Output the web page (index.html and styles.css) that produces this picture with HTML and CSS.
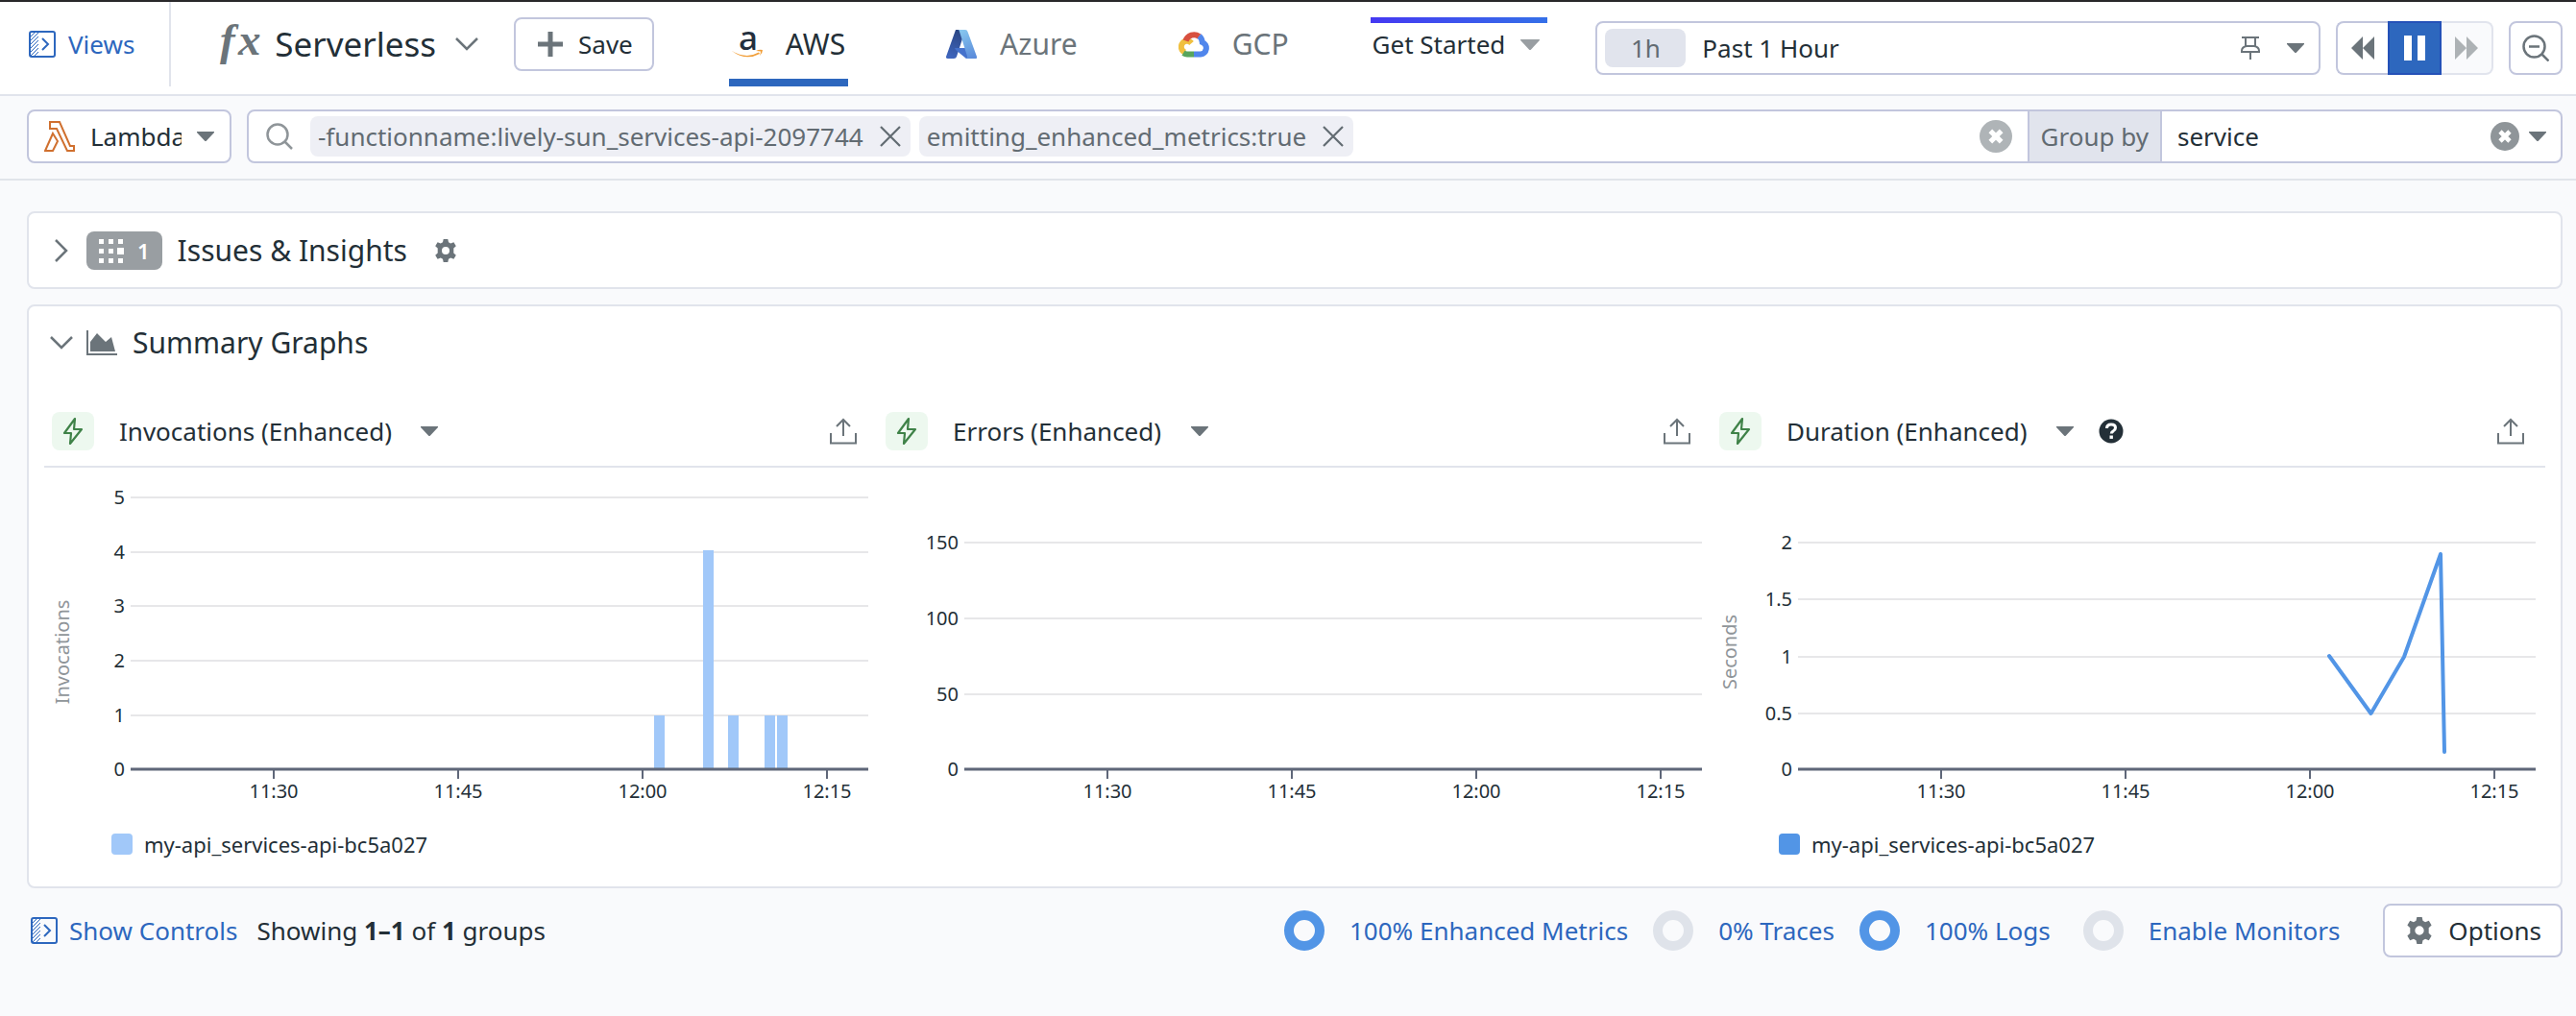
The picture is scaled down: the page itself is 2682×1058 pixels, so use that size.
FILE: index.html
```html
<!DOCTYPE html>
<html lang="en">
<head>
<meta charset="utf-8">
<title>Serverless</title>
<link rel="stylesheet" href="styles.css">
</head>
<body>
<svg class="sprite" aria-hidden="true">
  <defs>
    <pattern id="hatch" width="4" height="4" patternUnits="userSpaceOnUse">
      <path d="M-1 5 5-1M-1 1 1-1M3 5 5 3" stroke="#2d67be" stroke-width="1"/>
    </pattern>
    <linearGradient id="azDark" x1="0.6" y1="0" x2="0.3" y2="1"><stop offset="0" stop-color="#2a4583"/><stop offset="1" stop-color="#3f66bd"/></linearGradient>
    <linearGradient id="azLight" x1="0.3" y1="0" x2="0.6" y2="1"><stop offset="0" stop-color="#86c5ee"/><stop offset="1" stop-color="#5c8ddb"/></linearGradient>
  </defs>
  <symbol id="panel" viewBox="0 0 28 28">
    <rect x="2" y="2" width="8" height="24" fill="url(#hatch)"/>
    <rect x="1" y="1" width="26" height="26" rx="2" fill="none" stroke="#2d67be" stroke-width="2"/>
    <path d="M14 8l6 6-6 6" fill="none" stroke="#2d67be" stroke-width="2"/>
  </symbol>
  <symbol id="caret" viewBox="0 0 18 10"><path d="M0 0h18v1l-8 8.500q-1 1-2 0L0 1z"/></symbol>
  <symbol id="chevron" viewBox="0 0 24 14"><path d="M1 1l11 11L23 1" fill="none" stroke="currentColor" stroke-width="2.500"/></symbol>
  <symbol id="chevron-right" viewBox="0 0 14 24"><path d="M1 1l11 11L1 23" fill="none" stroke="currentColor" stroke-width="2.500"/></symbol>
  <symbol id="close" viewBox="0 0 22 22"><path d="M1 1l20 20M21 1L1 21" fill="none" stroke="currentColor" stroke-width="2.200"/></symbol>
  <symbol id="clear" viewBox="0 0 30 30"><circle cx="15" cy="15" r="15"/><path d="M10 10l10 10M20 10L10 20" stroke="#fff" stroke-width="4.600"/></symbol>
  <symbol id="gear" viewBox="0 0 24 24"><path fill-rule="evenodd" d="M9.700 0h4.600l.7 3.300 2.200 1.200 3.200-1.200 2.400 4-2.500 2.300v4.800l2.500 2.300-2.400 4-3.200-1.200-2.200 1.200-.7 3.300H9.700L9 20.700l-2.200-1.200-3.200 1.200-2.400-4 2.500-2.300V9.600L1.200 7.300l2.400-4 3.200 1.200L9 3.300zM12 8a4 4 0 1 0 0 8 4 4 0 0 0 0-8z"/></symbol>
  <symbol id="bolt" viewBox="0 0 22 30"><path d="M13 2L2 17h7L8 28l12-15h-8z" fill="none" stroke="#3f8248" stroke-width="2.200" stroke-linejoin="round"/></symbol>
  <symbol id="share" viewBox="0 0 28 28"><path d="M1 16v10.500h26V16M14 19V2M7 9l7-7 7 7" fill="none" stroke="currentColor" stroke-width="2"/></symbol>
</svg>

<header class="topbar">
  <a class="link views" href="#views"><svg width="28" height="28" aria-hidden="true"><use href="#panel"/></svg>Views</a>
  <button class="product" type="button">
    <svg class="fx" width="46" height="46" viewBox="0 0 46 46" aria-hidden="true"><text x="5" y="34" font-size="47">f<tspan x="24">x</tspan></text></svg>
    <span class="product-name">Serverless</span>
    <svg class="grey" width="24" height="14" aria-hidden="true"><use href="#chevron"/></svg>
  </button>
  <button class="btn save" type="button"><svg width="26" height="26" viewBox="0 0 26 26" aria-hidden="true"><path d="M13 0v26M0 13h26" stroke="#6b747a" stroke-width="5"/></svg>Save</button>
  <nav class="tabs" aria-label="Cloud provider">
    <a class="tab active" href="#aws"><svg class="aws" width="32" height="30" viewBox="0 0 32 30" aria-hidden="true"><text x="7" y="21" font-size="35">a</text><path d="M0 22q15 9 28 1.500l1 1.500Q14 33 0 22z" fill="#f19e38"/><path d="M25 22q4-2 7-1 0 3-3 6 1-3 1-4.500-2-.5-5-.5z" fill="#f19e38"/></svg>AWS</a>
    <a class="tab" href="#azure"><svg width="32" height="30" viewBox="0 0 32 30" aria-hidden="true"><path d="M10 0h10l-9 28q-.6 2-3 2H2q-2.500 0-2-2z" fill="url(#azDark)"/><path d="M9 19h13l3 11h-4L10 21z" fill="#4572cc"/><path d="M13 0h7q2 0 2.500 2L32 28q.4 2-1.500 2H20q2.500 0 2-2.500L14 2q-.4-1.500-1-2z" fill="url(#azLight)"/></svg>Azure</a>
    <a class="tab" href="#gcp"><svg width="32" height="28" viewBox="0 0 32 28" aria-hidden="true" fill="none" stroke-width="6"><path d="M7 22.500A6 6 0 1 1 13.500 13" stroke="#f0c040" /><path d="M7.500 10.500A9 9 0 0 1 21.500 6" stroke="#d8503f"/><path d="M21.500 5.500Q24.500 8 24.800 12A6.500 6.500 0 0 1 23 24.500H16" stroke="#5086ec"/><path d="M16 24.500H9q-2 0-4-1.200" stroke="#58a55c"/></svg>GCP</a>
  </nav>
  <button class="get-started" type="button">Get Started<svg width="20" height="11" aria-hidden="true" fill="#999ea2"><use href="#caret"/></svg></button>
  <div class="time">
    <button class="box picker" type="button">
      <span class="pill">1h</span><span class="picker-text">Past 1 Hour</span>
      <svg width="20" height="24" viewBox="0 0 20 24" aria-hidden="true" fill="none" stroke="#6b747a" stroke-width="2"><path d="M1 1h18M5 1v9M15 1v9M1 16v-1q0-4 5-5h8q5 1 5 5v1zM10 16v8"/></svg>
      <svg class="grey" width="18" height="10" aria-hidden="true"><use href="#caret"/></svg>
    </button>
    <div class="playback">
      <button class="play back" type="button" aria-label="Back"><svg width="24" height="24" viewBox="0 0 24 24" aria-hidden="true" fill="#6b747a"><path d="M12 0v24L0 12zM24 0v24L12 12z"/></svg></button>
      <button class="play pause" type="button" aria-label="Pause"><svg width="22" height="26" viewBox="0 0 22 26" aria-hidden="true" fill="#fff"><path d="M0 0h8v26H0zM14 0h8v26h-8z"/></svg></button>
      <button class="play forward" type="button" aria-label="Forward" disabled><svg width="24" height="24" viewBox="0 0 24 24" aria-hidden="true" fill="#adb2b5"><path d="M0 0v24l12-12zM12 0v24l12-12z"/></svg></button>
    </div>
    <button class="box zoom-out" type="button" aria-label="Zoom out"><svg width="28" height="28" viewBox="0 0 28 28" aria-hidden="true" fill="none" stroke="#6b747a" stroke-width="2.500"><circle cx="12.500" cy="12.500" r="11"/><path d="M7 12.500h11M20.500 20.500l7 7"/></svg></button>
  </div>
</header>

<section class="filters" aria-label="Filters">
  <div class="box service">
    <svg width="32" height="32" viewBox="0 0 32 32" aria-hidden="true" fill="none" stroke="#d0702f" stroke-width="2"><path d="M6 1h10l11 25h4v5h-7L13 8H6zM9 13l5 8-5 10H1z"/></svg>
    <select class="service-select" aria-label="Resource type"><option>Lambda</option></select>
    <svg class="grey" width="18" height="10" aria-hidden="true"><use href="#caret"/></svg>
  </div>
  <div class="box search">
    <div class="query">
      <svg width="28" height="28" viewBox="0 0 28 28" aria-hidden="true" fill="none" stroke="#8f9599" stroke-width="2.500"><circle cx="12" cy="12" r="10.500"/><path d="M19.500 19.500l7.500 7.500"/></svg>
      <div class="chips">
        <span class="chip">-functionname:lively-sun_services-api-2097744<button type="button" aria-label="Remove"><svg width="22" height="22" aria-hidden="true"><use href="#close"/></svg></button></span>
        <span class="chip">emitting_enhanced_metrics:true<button type="button" aria-label="Remove"><svg width="22" height="22" aria-hidden="true"><use href="#close"/></svg></button></span>
      </div>
      <input class="query-input" type="text" aria-label="Filter functions">
      <button class="plain" type="button" aria-label="Clear filters"><svg width="34" height="34" aria-hidden="true" fill="#afb4b7"><use href="#clear"/></svg></button>
    </div>
    <label class="group-label" for="group">Group by</label>
    <div class="group">
      <select class="group-select" id="group"><option>service</option></select>
      <button class="plain" type="button" aria-label="Clear grouping"><svg width="30" height="30" aria-hidden="true" fill="#8f9599"><use href="#clear"/></svg></button>
      <svg class="grey" width="18" height="10" aria-hidden="true"><use href="#caret"/></svg>
    </div>
  </div>
</section>

<main class="content">
  <section class="card issues">
    <button class="plain chev" type="button" aria-label="Expand"><svg width="14" height="24" aria-hidden="true"><use href="#chevron-right"/></svg></button>
    <span class="badge"><svg width="26" height="26" viewBox="0 0 26 26" aria-hidden="true" fill="#fff"><path d="M0 1h5v5H0zM10 1h5v5h-5zM20 1h5v5h-5zM0 11h5v5H0zM10 11h5v5h-5zM19 10h7v7h-7zM0 21h5v5H0zM10 21h5v5h-5zM20 21h5v5h-5z"/></svg>1</span>
    <h2 class="heading">Issues &amp; Insights</h2>
    <button class="plain issues-gear" type="button" aria-label="Settings"><svg width="24" height="24" aria-hidden="true"><use href="#gear"/></svg></button>
  </section>

  <section class="card">
    <div class="summary-head">
      <button class="plain chev" type="button" aria-label="Collapse"><svg width="24" height="14" aria-hidden="true"><use href="#chevron"/></svg></button>
      <svg class="grey" width="32" height="26" viewBox="0 0 32 26" aria-hidden="true"><path d="M0 0h2v24h30v2H0zM4 22V12l7-9 9 9 6-5 4 15z"/></svg>
      <h2 class="heading">Summary Graphs</h2>
    </div>
    <div class="widgets">
      <article class="widget">
        <header class="widget-head">
          <span class="bolt"><svg width="22" height="30" aria-hidden="true"><use href="#bolt"/></svg></span>
          <select class="metric" aria-label="First graph"><option>Invocations (Enhanced)</option></select>
          <svg class="grey" width="18" height="10" aria-hidden="true"><use href="#caret"/></svg>
          <button class="plain share" type="button" aria-label="Export"><svg width="28" height="28" aria-hidden="true"><use href="#share"/></svg></button>
        </header>
        <svg class="chart" viewBox="0 0 868 376" role="img" aria-label="Invocations over time">
          <path class="grid" d="M90 31h768M90 88h768M90 144h768M90 201h768M90 258h768"/>
          <path class="bar" d="M635 258h11v56h-11zM686 86h11v228h-11zM712 258h11v56h-11zM750 258h11v56h-11zM763 258h11v56h-11z"/>
          <path class="ticks" d="M239 314v10M431 314v10M623 314v10M815 314v10"/>
          <path class="axis" d="M90 314h768"/>
          <g class="ylab"><text x="84" y="38">5</text><text x="84" y="95">4</text><text x="84" y="151">3</text><text x="84" y="208">2</text><text x="84" y="265">1</text><text x="84" y="321">0</text></g>
          <g class="xlab"><text x="239" y="344">11:30</text><text x="431" y="344">11:45</text><text x="623" y="344">12:00</text><text x="815" y="344">12:15</text></g>
          <text class="unit" transform="translate(26 192) rotate(-90)">Invocations</text>
        </svg>
        <div class="legend"><span class="swatch light"></span>my-api_services-api-bc5a027</div>
      </article>
      <article class="widget">
        <header class="widget-head">
          <span class="bolt"><svg width="22" height="30" aria-hidden="true"><use href="#bolt"/></svg></span>
          <select class="metric" aria-label="Second graph"><option>Errors (Enhanced)</option></select>
          <svg class="grey" width="18" height="10" aria-hidden="true"><use href="#caret"/></svg>
          <button class="plain share" type="button" aria-label="Export"><svg width="28" height="28" aria-hidden="true"><use href="#share"/></svg></button>
        </header>
        <svg class="chart" viewBox="0 0 868 376" role="img" aria-label="Errors over time">
          <path class="grid" d="M90 78h768M90 157h768M90 236h768"/>
          <path class="ticks" d="M239 314v10M431 314v10M623 314v10M815 314v10"/>
          <path class="axis" d="M90 314h768"/>
          <g class="ylab"><text x="84" y="85">150</text><text x="84" y="164">100</text><text x="84" y="243">50</text><text x="84" y="321">0</text></g>
          <g class="xlab"><text x="239" y="344">11:30</text><text x="431" y="344">11:45</text><text x="623" y="344">12:00</text><text x="815" y="344">12:15</text></g>
        </svg>
      </article>
      <article class="widget">
        <header class="widget-head">
          <span class="bolt"><svg width="22" height="30" aria-hidden="true"><use href="#bolt"/></svg></span>
          <select class="metric" aria-label="Third graph"><option>Duration (Enhanced)</option></select>
          <svg class="grey" width="18" height="10" aria-hidden="true"><use href="#caret"/></svg>
          <button class="plain help" type="button" aria-label="Help"><svg width="26" height="26" viewBox="0 0 26 26" aria-hidden="true"><circle cx="13" cy="13" r="12.500" fill="#232f37"/><path d="M8.500 10q0-4 4.500-4t4.500 3.600q0 2-2.200 3.200-2 1-2 2.700" fill="none" stroke="#fff" stroke-width="3"/><path d="M11.500 17.500h3.400v3.400h-3.400z" fill="#fff"/></svg></button>
          <button class="plain share" type="button" aria-label="Export"><svg width="28" height="28" aria-hidden="true"><use href="#share"/></svg></button>
        </header>
        <svg class="chart" viewBox="0 0 868 376" role="img" aria-label="Duration over time">
          <path class="grid" d="M90 78h768M90 137h768M90 197h768M90 256h768"/>
          <path class="ticks" d="M239 314v10M431 314v10M623 314v10M815 314v10"/>
          <path class="axis" d="M90 314h768"/>
          <path class="line" d="M643 196l43.500 60 34.500-59 38-107 4 206"/>
          <g class="ylab"><text x="84" y="85">2</text><text x="84" y="144">1.5</text><text x="84" y="204">1</text><text x="84" y="263">0.5</text><text x="84" y="321">0</text></g>
          <g class="xlab"><text x="239" y="344">11:30</text><text x="431" y="344">11:45</text><text x="623" y="344">12:00</text><text x="815" y="344">12:15</text></g>
          <text class="unit" transform="translate(26 192) rotate(-90)">Seconds</text>
        </svg>
        <div class="legend"><span class="swatch"></span>my-api_services-api-bc5a027</div>
      </article>
    </div>
  </section>

  <footer class="footer">
    <a class="link controls" href="#controls"><svg width="28" height="28" aria-hidden="true"><use href="#panel"/></svg>Show Controls</a>
    <p class="count">Showing <b>1–1</b> of <b>1</b> groups</p>
    <div class="coverage">
      <a class="link stat" href="#metrics"><span class="ring full"></span>100% Enhanced Metrics</a>
      <a class="link stat" href="#traces"><span class="ring"></span>0% Traces</a>
      <a class="link stat" href="#logs"><span class="ring full"></span>100% Logs</a>
      <a class="link stat monitors" href="#monitors"><span class="ring"></span>Enable Monitors</a>
    </div>
    <button class="btn options" type="button"><svg class="grey" width="28" height="28" aria-hidden="true"><use href="#gear"/></svg>Options</button>
  </footer>
</main>
</body>
</html>
```
FILE: styles.css
```css
* { box-sizing: border-box; }

body {
  margin: 0;
  background: #f9fafc;
  color: #232f37;
  font: 26px/36px "Noto Sans", sans-serif;
}

svg { display: block; flex: none; }
.sprite { position: absolute; width: 0; height: 0; }
.grey { color: #6b747a; fill: #6b747a; }

button, select, input { font: inherit; color: inherit; margin: 0; padding: 0; }
button { display: flex; align-items: center; background: none; border: 0; white-space: nowrap; }
select { appearance: none; border: 0; background: none; }
.plain { color: #6b747a; fill: #6b747a; }
.link { display: flex; align-items: center; color: #2d67be; text-decoration: none; white-space: nowrap; }

.box, .btn {
  display: flex;
  align-items: center;
  height: 56px;
  background: #fff;
  border: 2px solid #c2c6dd;
  border-radius: 8px;
}

/* Top bar */
.topbar {
  display: flex;
  height: 100px;
  padding: 0 14px 8px 30px;
  align-items: center;
  background: #fff;
  border-top: 2px solid #29282a;
  border-bottom: 2px solid #e1e4ec;
}
.views { align-self: stretch; gap: 13px; padding-right: 36px; border-right: 2px solid #e1e4ec; }
.product { gap: 16px; margin-left: 46px; }
.fx, .aws { overflow: visible; }
.fx text { font-family: "Liberation Serif", serif; font-weight: bold; font-style: italic; fill: #6b747a; }
.product-name { font-size: 35px; line-height: 48px; }
.product > :last-child { margin-left: 4px; }
.save { gap: 16px; margin-left: 37px; padding: 0 20px 0 23px; }

.tabs { display: flex; align-self: stretch; gap: 99px; margin-left: 78px; font-size: 30px; line-height: 40px; }
.tab { display: flex; align-items: center; gap: 24px; padding: 8px 3px 0; border-bottom: 8px solid transparent; color: #6b747a; text-decoration: none; }
.tab.active { color: #232f37; border-color: #2d67be; }
.aws text { font-family: "Noto Sans", sans-serif; font-weight: 500; fill: #232f3e; }

.get-started {
  height: 56px;
  gap: 16px;
  margin-left: 82px;
  padding: 0 8px 0 2px;
  background: linear-gradient(90deg, #4538f2, #3470e8) 0 0 / 100% 6px no-repeat;
}

.time { display: flex; flex: 1; gap: 16px; margin-left: 50px; padding-top: 8px; }
.picker { flex: 1; padding: 0 15px 0 8px; }
.pill { width: 84px; height: 40px; line-height: 40px; border-radius: 8px; background: #e1e4ed; color: #626b72; }
.picker-text { flex: 1; padding-left: 17px; text-align: left; }
.picker > :last-child { margin-left: 28px; }
.playback { display: flex; }
.play { width: 54px; height: 56px; justify-content: center; border: 2px solid #c2c6dd; background: #fff; }
.back { border-right: 0; border-radius: 8px 0 0 8px; }
.pause { width: 56px; background: #2d67be; border-color: #2451b8; }
.forward { border-color: #e1e4ed; border-left: 0; border-radius: 0 8px 8px 0; background: #f9fafc; }
.zoom-out { width: 56px; justify-content: center; }

/* Filters */
.filters { display: flex; gap: 16px; padding: 14px 14px 16px 28px; border-bottom: 2px solid #e1e5ea; }
.service { gap: 16px; padding: 0 16px; }
.service-select { width: 95px; overflow: hidden; text-overflow: clip; }
.search { flex: 1; align-items: stretch; overflow: hidden; }
.query { display: flex; flex: 1; align-items: center; padding: 0 16px 0 18px; }
.chips { display: flex; gap: 9px; margin-left: 18px; }
.chip { display: flex; align-items: center; gap: 17px; height: 42px; padding: 0 10px 0 8px; border-radius: 8px; background: #eeeff5; color: #626b72; white-space: nowrap; }
.query-input { flex: 1; min-width: 0; border: 0; outline: 0; background: none; }
.group-label { display: flex; align-items: center; padding: 0 12px; background: #e1e4ed; color: #626b72; border: 2px solid #c2c6dd; border-width: 0 2px; }
.group { display: flex; align-items: center; width: 415px; padding: 0 15px 0 16px; }
.group-select { flex: 1; }
.group > :last-child { margin-left: 10px; }

/* Cards */
.content { display: flex; flex-direction: column; gap: 16px; padding: 32px 14px 32px 28px; }
.card { background: #fff; border: 2px solid #e1e4ec; border-radius: 8px; }
.heading { margin: 0; font-size: 30px; line-height: 40px; font-weight: 400; }
.chev { width: 28px; justify-content: center; }
.issues { display: flex; align-items: center; height: 81px; padding-left: 20px; }
.badge { display: flex; align-items: center; gap: 14px; height: 40px; margin: 0 16px 0 12px; padding: 0 13px; border-radius: 8px; background: #999ea2; color: #fff; font-size: 22px; font-weight: 600; }
.issues-gear { margin-left: 28px; }
.summary-head { display: flex; align-items: center; height: 76px; padding-left: 20px; gap: 12px; }
.summary-head .heading { margin-left: 4px; }

.widgets { display: grid; grid-template-columns: repeat(3, 1fr); padding: 18px 16px 28px; }
.widget-head { display: flex; align-items: center; height: 74px; padding: 0 22px 0 8px; border-bottom: 2px solid #e1e4ec; }
.bolt { display: flex; align-items: center; justify-content: center; width: 44px; height: 40px; border-radius: 8px; background: #edf8ef; }
.metric { margin: 0 30px 0 26px; }
.help { margin-left: 26px; }
.share { margin-left: auto; }

.chart { width: 100%; height: auto; font-size: 20px; fill: #232f37; }
.grid { stroke: #e7e7e9; stroke-width: 2; }
.axis { stroke: #5f6779; stroke-width: 3; }
.ticks { stroke: #5f6779; stroke-width: 2; }
.bar { fill: #a1c8f9; }
.line { fill: none; stroke: #5295e6; stroke-width: 4; stroke-linejoin: round; stroke-linecap: round; }
.ylab { text-anchor: end; }
.xlab, .unit { text-anchor: middle; }
.unit { fill: #8f9599; }
.legend { display: flex; align-items: center; gap: 12px; height: 32px; padding-left: 70px; font-size: 22px; }
.swatch { width: 22px; height: 22px; border-radius: 4px; background: #5295e6; }
.swatch.light { background: #a1c8f9; }

/* Footer */
.footer { display: flex; align-items: center; padding-left: 4px; }
.controls { gap: 12px; }
.count { margin: 0 auto 0 20px; white-space: nowrap; }
.count b { font-weight: 700; }
.coverage { display: flex; gap: 26px; }
.stat { gap: 26px; }
.stat.monitors { margin-left: 8px; }
.ring { width: 42px; height: 42px; border: 10px solid #dfe3ea; border-radius: 50%; }
.ring.full { border-color: #5295e6; }
.options { gap: 16px; margin-left: 45px; padding: 0 20px 0 22px; }
```
